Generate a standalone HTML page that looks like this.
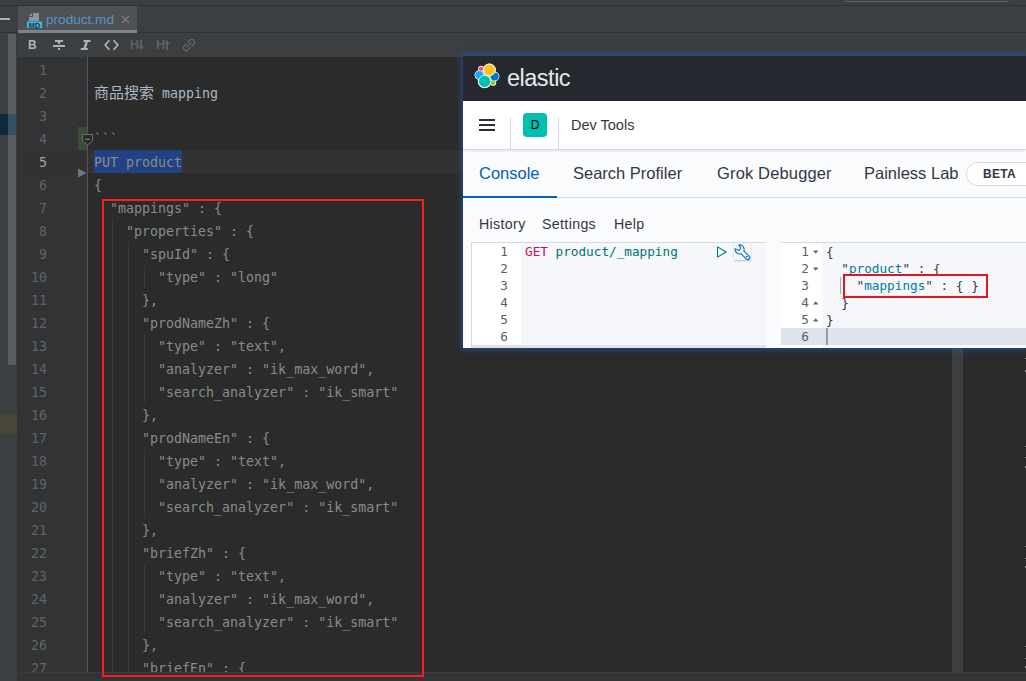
<!DOCTYPE html>
<html lang="zh">
<head>
<meta charset="utf-8">
<title>product.md</title>
<style>
*{box-sizing:border-box;margin:0;padding:0}
html,body{width:1026px;height:681px;overflow:hidden;background:#2b2b2b}
body{position:relative;font-family:"Liberation Sans","Noto Sans CJK SC",sans-serif}
.abs{position:absolute}
/* IDE */
#topband{left:0;top:0;width:1026px;height:6px;background:#3c3f41;border-bottom:1px solid #2f3133}
#tabrow{left:0;top:6px;width:1026px;height:27px;background:#3c3f41;border-bottom:1px solid #2f3132}
#tab{left:18px;top:6px;width:119px;height:27px;background:#4e5254;border-bottom:3px solid #7d838a}
#tabname{left:46px;top:11px;font-size:13.6px;line-height:18px;color:#5893cc}
#toolbar{left:18px;top:33px;width:1008px;height:24px;background:#3c3f41}
#leftpanel{left:0;top:33px;width:18px;height:648px;background:#3c3f41}
#gutter{left:18px;top:57px;width:69px;height:615px;background:#313335}
#gutterline{left:87px;top:57px;width:1px;height:615px;background:#555555}
#editor{left:88px;top:57px;width:938px;height:615px;background:#2b2b2b}
#curline{left:88px;top:150px;width:938px;height:23px;background:#323232}
#sel{left:94px;top:150px;width:88px;height:23px;background:#214283}
#bottombar{left:18px;top:672px;width:1008px;height:9px;background:#323436;border-top:1px solid #393b3d}
.ln,.code{font-family:"DejaVu Sans Mono","Liberation Mono",monospace;font-size:13.3px;line-height:23px;white-space:pre}
.ln{left:17px;width:30px;text-align:right;color:#606366}
.code{left:94px;color:#878b8e}
.ln.cur{color:#a4a3a3}
.cjk{font-family:"Noto Sans CJK SC",sans-serif;font-size:15px;line-height:0}
.guide{width:1px;background:#393939}
#redbox{left:102px;top:199px;width:322px;height:478px;border:2px solid #f91c24}
/* Kibana overlay */
#kb{left:463px;top:56px;width:563px;height:292px;background:#fafbfd;box-shadow:0 0 7px 1px rgba(36,88,165,.85)}
#kbhead{left:0;top:0;width:563px;height:45px;background:#25282f}
#kbnav{left:0;top:45px;width:563px;height:49px;background:#fff;border-bottom:1px solid #d3dae6;box-shadow:0 2px 2px -1px rgba(152,162,179,.3)}

#kbhead .word{left:44px;top:8px;font-size:23.5px;line-height:28px;color:#e6e8eb;letter-spacing:-0.5px}
.vsep{width:1px;background:#d3dae6}
#avatar{left:60px;top:57px;width:24px;height:24px;border-radius:4px;background:#00bfb3;color:#000;font-size:12px;line-height:24px;text-align:center}
#devtools{left:108px;top:59px;font-size:14.5px;line-height:20px;color:#343741}
#kbtabs{left:0;top:95px;width:563px;height:47px;border-bottom:1px solid #d3dae6}
.kt{top:105px;font-size:16.5px;line-height:24px;color:#343741;white-space:nowrap}
#kbul{left:0;top:140px;width:94px;height:2px;background:#0062b4}
#beta{left:503px;top:106px;width:80px;height:24px;border:1px solid #d3dae6;border-radius:12px;background:#fff;font-size:12px;font-weight:700;line-height:22px;color:#343741;padding-left:16px;letter-spacing:.3px}
.km{top:158px;font-size:14.2px;line-height:20px;color:#343741;white-space:nowrap;letter-spacing:.35px}
#edL{left:8px;top:186px;width:295px;height:106px;background:#f5f7fa;border:1px solid #d3dae6;border-right:0;border-bottom:0}
#edLg{left:9px;top:187px;width:49px;height:102px;background:#fff}
#edLs{left:9px;top:289px;width:294px;height:3px;background:#dfe3ec}
#edR{left:318px;top:186px;width:245px;height:106px;background:#f5f7fa;border-top:1px solid #d3dae6}
#edRg{left:318px;top:187px;width:41px;height:105px;background:#fff}
#edRcur{left:318px;top:272px;width:245px;height:17px;background:#dfe3ec}
.kl,.kc{font-family:"DejaVu Sans Mono","Liberation Mono",monospace;font-size:12.7px;line-height:17px;white-space:pre}
.kl{color:#5a5e6a;text-align:right;width:20px}
.kc{color:#343741}
.kkey{color:#0079a5}
#kred{left:380px;top:218px;width:145px;height:24px;border:2px solid #e8141c}

.tb{top:36px;font-size:13.5px;line-height:18px;font-weight:700;color:#afb1b3}
.tbd{color:#5e6060}
#lpdark{left:17px;top:33px;width:1px;height:648px;background:#313335}
#lpthumb{left:8px;top:34px;width:8px;height:331px;background:#5a5d5f}
#lpsel1{left:0;top:114px;width:8px;height:21px;background:#0d293e}
#lpsel2{left:8px;top:114px;width:8px;height:21px;background:#36505f}
#lpyel{left:0;top:414px;width:17px;height:20px;background:#49453a}
#vcs{left:78px;top:127px;width:9px;height:23px;background:#384c38}
#gcur{left:18px;top:150px;width:69px;height:23px;background:#323232}
#rdiv{left:952px;top:348px;width:11px;height:324px;background:#3c3f41}
</style>
</head>
<body>
<div class="abs" id="topband"></div>
<div class="abs" style="left:844px;top:-9px;width:165px;height:11px;border:1px solid #626566;border-radius:3px"></div>
<div class="abs" id="tabrow"></div>
<div class="abs" id="tab"></div>
<div class="abs" id="tabname">product.md</div>
<div class="abs" id="toolbar"></div>
<div class="abs" id="leftpanel"></div>
<div class="abs" id="lpdark"></div>
<div class="abs" id="lpthumb"></div>
<div class="abs" id="lpsel1"></div>
<div class="abs" id="lpsel2"></div>
<div class="abs" id="lpyel"></div>
<div class="abs" style="left:0;top:18px;width:10px;height:2px;background:#afb1b3"></div>
<svg class="abs" style="left:26px;top:12px" width="17" height="17" viewBox="0 0 17 17">
<path d="M7 1 H13 V9 H3 V5 H7 Z" fill="#9aa7b0" opacity=".8"/><path d="M6 1 V4 H3 Z" fill="#9aa7b0" opacity=".8"/>
<rect x="1" y="9.5" width="15" height="6.5" fill="#40b6e0"/>
<text x="8.5" y="15.6" font-family="Liberation Sans, sans-serif" font-size="7.4" font-weight="700" fill="#1c3442" text-anchor="middle">MD</text>
</svg>
<svg class="abs" style="left:121px;top:15px" width="9" height="9" viewBox="0 0 9 9"><path d="M1 1 L8 8 M8 1 L1 8" stroke="#7f8385" stroke-width="1.1"/></svg>
<div class="abs tb" style="left:28px;transform:scaleX(.88);transform-origin:0 0">B</div>
<svg class="abs" style="left:53px;top:40px" width="12" height="10" viewBox="0 0 12 10"><path d="M2 0h8v2H7v2H5V2H2Z M0 5h12v2H0Z M5 8h2v2H5Z" fill="#afb1b3"/></svg>
<svg class="abs" style="left:80px;top:40px" width="11" height="10" viewBox="0 0 11 10"><path d="M3.5 0h7v2H8L6 8h1.8v2H0.8V8H3.4L5.4 2H3.5Z" fill="#afb1b3"/></svg>
<svg class="abs" style="left:104px;top:40px" width="15" height="10" viewBox="0 0 15 10"><path d="M5.4 0.2 L1.2 5 L5.4 9.8 M9.6 0.2 L13.8 5 L9.6 9.8" fill="none" stroke="#afb1b3" stroke-width="1.7"/></svg>
<div class="abs tb tbd" style="left:130px;font-size:12.5px">H</div>
<svg class="abs" style="left:138px;top:40px" width="6" height="10" viewBox="0 0 6 10"><path d="M2 0h2v6h2L3 10 0 6h2Z" fill="#5e6060"/></svg>
<div class="abs tb tbd" style="left:156px;font-size:12.5px">H</div>
<svg class="abs" style="left:164px;top:40px" width="6" height="10" viewBox="0 0 6 10"><path d="M2 10h2V4h2L3 0 0 4h2Z" fill="#5e6060"/></svg>
<svg class="abs" style="left:182px;top:38px" width="14" height="14" viewBox="0 0 14 14"><g fill="none" stroke="#5e6060" stroke-width="1.6" stroke-linecap="round"><path d="M6 4.2 L8 2.2 A2.6 2.6 0 0 1 11.8 6 L9.8 8"/><path d="M8 9.8 L6 11.8 A2.6 2.6 0 0 1 2.2 8 L4.2 6"/><path d="M5.2 8.8 L8.8 5.2"/></g></svg>
<div class="abs" id="gutter"></div>
<div class="abs" id="gcur"></div>
<div class="abs" id="vcs"></div>
<div class="abs" id="gutterline"></div>
<div class="abs" id="editor"></div>
<div class="abs" id="curline"></div>
<div class="abs" id="sel"></div>
<div class="abs ln" style="top:59px">1</div>
<div class="abs ln" style="top:82px">2</div>
<div class="abs code" style="top:82px;color:#a9b7c6"><span class="cjk">商品搜索</span> mapping</div>
<div class="abs ln" style="top:105px">3</div>
<div class="abs ln" style="top:128px">4</div>
<div class="abs code" style="top:128px">```</div>
<div class="abs ln cur" style="top:151px">5</div>
<div class="abs code" style="top:151px">PUT product</div>
<div class="abs ln" style="top:174px">6</div>
<div class="abs code" style="top:174px">{</div>
<div class="abs ln" style="top:197px">7</div>
<div class="abs code" style="top:197px">  "mappings" : {</div>
<div class="abs ln" style="top:220px">8</div>
<div class="abs code" style="top:220px">    "properties" : {</div>
<div class="abs ln" style="top:243px">9</div>
<div class="abs code" style="top:243px">      "spuId" : {</div>
<div class="abs ln" style="top:266px">10</div>
<div class="abs code" style="top:266px">        "type" : "long"</div>
<div class="abs ln" style="top:289px">11</div>
<div class="abs code" style="top:289px">      },</div>
<div class="abs ln" style="top:312px">12</div>
<div class="abs code" style="top:312px">      "prodNameZh" : {</div>
<div class="abs ln" style="top:335px">13</div>
<div class="abs code" style="top:335px">        "type" : "text",</div>
<div class="abs ln" style="top:358px">14</div>
<div class="abs code" style="top:358px">        "analyzer" : "ik_max_word",</div>
<div class="abs ln" style="top:381px">15</div>
<div class="abs code" style="top:381px">        "search_analyzer" : "ik_smart"</div>
<div class="abs ln" style="top:404px">16</div>
<div class="abs code" style="top:404px">      },</div>
<div class="abs ln" style="top:427px">17</div>
<div class="abs code" style="top:427px">      "prodNameEn" : {</div>
<div class="abs ln" style="top:450px">18</div>
<div class="abs code" style="top:450px">        "type" : "text",</div>
<div class="abs ln" style="top:473px">19</div>
<div class="abs code" style="top:473px">        "analyzer" : "ik_max_word",</div>
<div class="abs ln" style="top:496px">20</div>
<div class="abs code" style="top:496px">        "search_analyzer" : "ik_smart"</div>
<div class="abs ln" style="top:519px">21</div>
<div class="abs code" style="top:519px">      },</div>
<div class="abs ln" style="top:542px">22</div>
<div class="abs code" style="top:542px">      "briefZh" : {</div>
<div class="abs ln" style="top:565px">23</div>
<div class="abs code" style="top:565px">        "type" : "text",</div>
<div class="abs ln" style="top:588px">24</div>
<div class="abs code" style="top:588px">        "analyzer" : "ik_max_word",</div>
<div class="abs ln" style="top:611px">25</div>
<div class="abs code" style="top:611px">        "search_analyzer" : "ik_smart"</div>
<div class="abs ln" style="top:634px">26</div>
<div class="abs code" style="top:634px">      },</div>
<div class="abs ln" style="top:657px">27</div>
<div class="abs code" style="top:657px">      "briefEn" : {</div>
<div class="abs guide" style="left:112px;top:219px;height:453px"></div>
<div class="abs guide" style="left:128px;top:242px;height:430px"></div>
<div class="abs guide" style="left:144px;top:265px;height:23px"></div>
<div class="abs guide" style="left:144px;top:334px;height:69px"></div>
<div class="abs guide" style="left:144px;top:449px;height:69px"></div>
<div class="abs guide" style="left:144px;top:564px;height:69px"></div>
<svg class="abs" style="left:81px;top:133px" width="13" height="13" viewBox="0 0 13 13"><path d="M1.5 1.5 H11.5 V8 L6.5 12 L1.5 8Z" fill="#2b2b2b" stroke="#6e6e6e" stroke-width="1"/><path d="M4 6.3 H9" stroke="#8a8a8a" stroke-width="1"/></svg>
<svg class="abs" style="left:78px;top:168px" width="9" height="10" viewBox="0 0 9 10"><path d="M0 0.6 L8.6 5 L0 9.4Z" fill="#6b7680"/></svg>
<div class="abs" id="rdiv"></div>
<div class="abs" style="left:1025px;top:358px;width:1px;height:1px;background:#8f979f"></div><div class="abs" style="left:1025px;top:370px;width:1px;height:2px;background:#8f979f"></div><div class="abs" style="left:1025px;top:446px;width:1px;height:1px;background:#8f979f"></div><div class="abs" style="left:1025px;top:457px;width:1px;height:1px;background:#8f979f"></div><div class="abs" style="left:1025px;top:466px;width:1px;height:2px;background:#8f979f"></div><div class="abs" style="left:1025px;top:546px;width:1px;height:1px;background:#8f979f"></div><div class="abs" style="left:1025px;top:558px;width:1px;height:1px;background:#8f979f"></div><div class="abs" style="left:1025px;top:566px;width:1px;height:2px;background:#8f979f"></div><div class="abs" style="left:1025px;top:646px;width:1px;height:1px;background:#8f979f"></div><div class="abs" style="left:1025px;top:658px;width:1px;height:1px;background:#8f979f"></div><div class="abs" style="left:1025px;top:666px;width:1px;height:2px;background:#8f979f"></div>
<div class="abs" id="bottombar"></div>
<div class="abs" id="redbox"></div>
<div class="abs" id="kb">
<div class="abs" id="kbhead">
<svg class="abs" style="left:11px;top:7px" width="26" height="26" viewBox="0 0 26 26">
<g fill="#fff"><circle cx="15.4" cy="7" r="6.5"/><circle cx="10.6" cy="18.4" r="6.8"/><circle cx="7.1" cy="5.8" r="3"/><circle cx="5.4" cy="12.1" r="4.9"/><circle cx="20.6" cy="13.5" r="4.8"/><circle cx="19.1" cy="19.7" r="3.1"/></g>
<circle cx="7.1" cy="5.8" r="2.3" fill="#f04e98"/>
<circle cx="5.4" cy="12.1" r="4.2" fill="#1ba9f5"/>
<circle cx="20.6" cy="13.5" r="4.1" fill="#0077cc"/>
<circle cx="19.1" cy="19.7" r="2.4" fill="#93c90e"/>
<circle cx="15.4" cy="7" r="5.9" fill="#fec514" stroke="#fff" stroke-width=".7"/>
<circle cx="10.6" cy="18.4" r="6.1" fill="#00bfb3" stroke="#fff" stroke-width=".7"/>
</svg>
<div class="abs word">elastic</div>
</div>
<div class="abs" id="kbnav"></div>
<svg class="abs" style="left:16px;top:63px" width="16" height="12" viewBox="0 0 16 12"><path d="M0 1h16M0 6h16M0 11h16" stroke="#2a2e3a" stroke-width="1.8"/></svg>
<div class="abs vsep" style="left:47px;top:61px;height:32px"></div>
<div class="abs" id="avatar">D</div>
<div class="abs vsep" style="left:95px;top:61px;height:32px"></div>
<div class="abs" id="devtools">Dev Tools</div>
<div class="abs" id="kbtabs"></div>
<div class="abs" id="kbul"></div>
<div class="abs kt" id="kt1" style="left:16px;color:#0062b4">Console</div>
<div class="abs kt" id="kt2" style="left:110px">Search Profiler</div>
<div class="abs kt" id="kt3" style="left:254px;letter-spacing:.15px">Grok Debugger</div>
<div class="abs kt" id="kt4" style="left:401px">Painless Lab</div>
<div class="abs" id="beta">BETA</div>
<div class="abs km" id="km1" style="left:16px">History</div>
<div class="abs km" id="km2" style="left:79px">Settings</div>
<div class="abs km" id="km3" style="left:151px">Help</div>
<div class="abs" id="edL"></div>
<div class="abs" id="edLg"></div>
<div class="abs" id="edLs"></div>
<div class="abs" id="edR"></div>
<div class="abs" id="edRg"></div>
<div class="abs" id="edRcur"></div>
<div class="abs kl" style="left:25px;top:187px">1</div>
<div class="abs kl" style="left:326px;top:187px">1</div>
<div class="abs kl" style="left:25px;top:204px">2</div>
<div class="abs kl" style="left:326px;top:204px">2</div>
<div class="abs kl" style="left:25px;top:221px">3</div>
<div class="abs kl" style="left:326px;top:221px">3</div>
<div class="abs kl" style="left:25px;top:238px">4</div>
<div class="abs kl" style="left:326px;top:238px">4</div>
<div class="abs kl" style="left:25px;top:255px">5</div>
<div class="abs kl" style="left:326px;top:255px">5</div>
<div class="abs kl" style="left:25px;top:272px">6</div>
<div class="abs kl" style="left:326px;top:272px">6</div>
<div class="abs kc" style="left:62px;top:187px"><span style="color:#c80a68">GET</span> <span style="color:#00756c">product/_mapping</span></div>
<div class="abs kc" style="left:363px;top:187px">{</div>
<div class="abs kc" style="left:363px;top:204px">  "<span class="kkey">product</span>" : {</div>
<div class="abs kc" style="left:363px;top:221px">    "<span class="kkey">mappings</span>" : { }</div>
<div class="abs kc" style="left:363px;top:238px">  }</div>
<div class="abs kc" style="left:363px;top:255px">}</div>
<svg class="abs" style="left:349.6px;top:194px" width="5.4" height="4" viewBox="0 0 5.4 4"><polygon points="0,0.4 5.4,0.4 2.7,3.7" fill="#5f6368"/></svg>
<svg class="abs" style="left:349.6px;top:211px" width="5.4" height="4" viewBox="0 0 5.4 4"><polygon points="0,0.4 5.4,0.4 2.7,3.7" fill="#5f6368"/></svg>
<svg class="abs" style="left:349.6px;top:245px" width="5.4" height="4" viewBox="0 0 5.4 4"><polygon points="0,3.6 5.4,3.6 2.7,0.3" fill="#5f6368"/></svg>
<svg class="abs" style="left:349.6px;top:262px" width="5.4" height="4" viewBox="0 0 5.4 4"><polygon points="0,3.6 5.4,3.6 2.7,0.3" fill="#5f6368"/></svg>
<div class="abs" style="left:377px;top:221px;width:1px;height:17px;background:#aaa"></div>
<div class="abs" style="left:363px;top:272px;width:1.5px;height:17px;background:#999"></div>
<div class="abs" id="kred"></div>
<svg class="abs" style="left:253px;top:189px" width="13" height="15" viewBox="0 0 13 15"><path d="M1.5 1.9 L10.2 7 L1.5 12.1Z" fill="none" stroke="#017d73" stroke-width="1.1" stroke-linejoin="round"/></svg>
<div class="abs" style="left:271px;top:187px;width:17px;height:17px;background:#f4f6fa;box-shadow:0 1px 1.5px rgba(120,145,180,.5)"></div>
<svg class="abs" style="left:270.5px;top:187.5px" width="17" height="17" viewBox="0 0 17 17"><path d="M4.82 0.97 L6.9 4.2 L4.8 6.5 L1.17 4.62 A4.5 4.5 0 0 0 6.97 9.69 L12.39 15.11 A2 2 0 0 0 15.21 12.29 L9.84 6.92 A4.5 4.5 0 0 0 4.82 0.97 Z" fill="none" stroke="#0b6cb5" stroke-width="1.1" stroke-linejoin="round"/><circle cx="12.7" cy="12.6" r="0.85" fill="#006bb4"/></svg>
</div>
</body>
</html>
